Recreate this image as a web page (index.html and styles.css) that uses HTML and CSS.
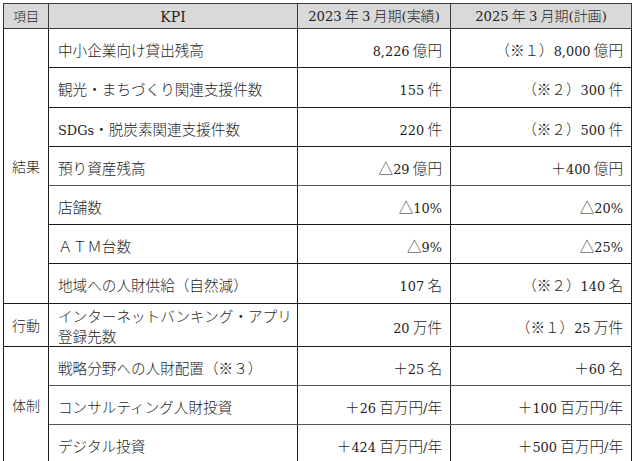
FILE: index.html
```html
<!DOCTYPE html>
<html lang="ja">
<head>
<meta charset="utf-8">
<title>KPI</title>
<link rel="stylesheet" href="styles.css">
</head>
<body>
<table class="kpi">
  <colgroup>
    <col class="c-cat"><col class="c-kpi"><col class="c-a"><col class="c-b">
  </colgroup>
  <thead>
    <tr class="head">
      <th class="h-cat">項目</th>
      <th><span class="n kpi-h">KPI</span></th>
      <th><span class="n">2023</span> 年 <span class="n">3</span> 月期<span class="n">(</span>実績<span class="n">)</span></th>
      <th><span class="n">2025</span> 年 <span class="n">3</span> 月期<span class="n">(</span>計画<span class="n">)</span></th>
    </tr>
  </thead>
  <tbody>
    <tr class="r39">
      <td class="cat" rowspan="7">結果</td>
      <td class="name">中小企業向け貸出残高</td>
      <td class="num"><span class="n">8,226</span> 億円</td>
      <td class="num">（※１）<span class="n">8,000</span> 億円</td>
    </tr>
    <tr class="r40">
      <td class="name">観光・まちづくり関連支援件数</td>
      <td class="num"><span class="n">155</span> 件</td>
      <td class="num">（※２）<span class="n">300</span> 件</td>
    </tr>
    <tr class="r39">
      <td class="name"><span class="n">SDGs</span>・脱炭素関連支援件数</td>
      <td class="num"><span class="n">220</span> 件</td>
      <td class="num">（※２）<span class="n">500</span> 件</td>
    </tr>
    <tr class="r39 soft">
      <td class="name">預り資産残高</td>
      <td class="num">△<span class="n">29</span> 億円</td>
      <td class="num">＋<span class="n">400</span> 億円</td>
    </tr>
    <tr class="r39">
      <td class="name">店舗数</td>
      <td class="num">△<span class="n">10%</span></td>
      <td class="num">△<span class="n">20%</span></td>
    </tr>
    <tr class="r39">
      <td class="name">ＡＴＭ台数</td>
      <td class="num">△<span class="n">9%</span></td>
      <td class="num">△<span class="n">25%</span></td>
    </tr>
    <tr class="r40">
      <td class="name">地域への人財供給（自然減）</td>
      <td class="num"><span class="n">107</span> 名</td>
      <td class="num">（※２）<span class="n">140</span> 名</td>
    </tr>
    <tr class="r39">
      <td class="cat">行動</td>
      <td class="name two">インターネットバンキング・アプリ<br>登録先数</td>
      <td class="num"><span class="n">20</span> 万件</td>
      <td class="num">（※１）<span class="n">25</span> 万件</td>
    </tr>
    <tr class="r39 soft">
      <td class="cat" rowspan="3">体制</td>
      <td class="name">戦略分野への人財配置（※３）</td>
      <td class="num">＋<span class="n">25</span> 名</td>
      <td class="num">＋<span class="n">60</span> 名</td>
    </tr>
    <tr class="r39 soft">
      <td class="name">コンサルティング人財投資</td>
      <td class="num">＋<span class="n">26</span> 百万円<span class="n">/</span>年</td>
      <td class="num">＋<span class="n">100</span> 百万円<span class="n">/</span>年</td>
    </tr>
    <tr class="r39">
      <td class="name">デジタル投資</td>
      <td class="num">＋<span class="n">424</span> 百万円<span class="n">/</span>年</td>
      <td class="num">＋<span class="n">500</span> 百万円<span class="n">/</span>年</td>
    </tr>
  </tbody>
</table>
</body>
</html>
```
FILE: styles.css
```css
html, body {
  margin: 0;
  padding: 0;
  background: #ffffff;
}

body {
  padding: 3px 0 0 3px;
  font-family: "Noto Sans CJK JP", sans-serif;
  font-weight: 300;
  color: #1e1e1e;
}

.kpi {
  border-collapse: collapse;
  table-layout: fixed;
  width: 628px;
  font-size: 14.6px;
}

.c-cat { width: 45px; }
.c-kpi { width: 249px; }
.c-a { width: 153px; }
.c-b { width: 181px; }

.n {
  font-family: "DejaVu Serif", "Liberation Serif", serif;
  font-size: 12.9px;
  font-weight: normal;
}

.kpi th,
.kpi td {
  border: 1px solid #1a1a1a;
  padding: 0;
  overflow: hidden;
  white-space: nowrap;
}

.kpi th {
  background: #d9d9d9;
  font-weight: 300;
  font-size: 14px;
  height: 23px;
  text-align: center;
  line-height: 22px;
  border-color: #3a3a3a;
}

.kpi th .n {
  font-size: 13.2px;
}

.kpi th .kpi-h {
  font-size: 14px;
}

.kpi th.h-cat {
  font-size: 13px;
}

.r39 td { height: 36px; }
.r40 td { height: 37px; }

.soft td { border-bottom-color: #555555; }

.cat {
  text-align: center;
  vertical-align: middle;
  font-size: 14px;
}

.name {
  text-align: left;
  padding-left: 9px !important;
  padding-top: 2px !important;
  vertical-align: middle;
}

.name.two {
  line-height: 20px;
}

.num {
  text-align: right;
  padding-right: 8px !important;
  padding-top: 2px !important;
  vertical-align: middle;
}
```
